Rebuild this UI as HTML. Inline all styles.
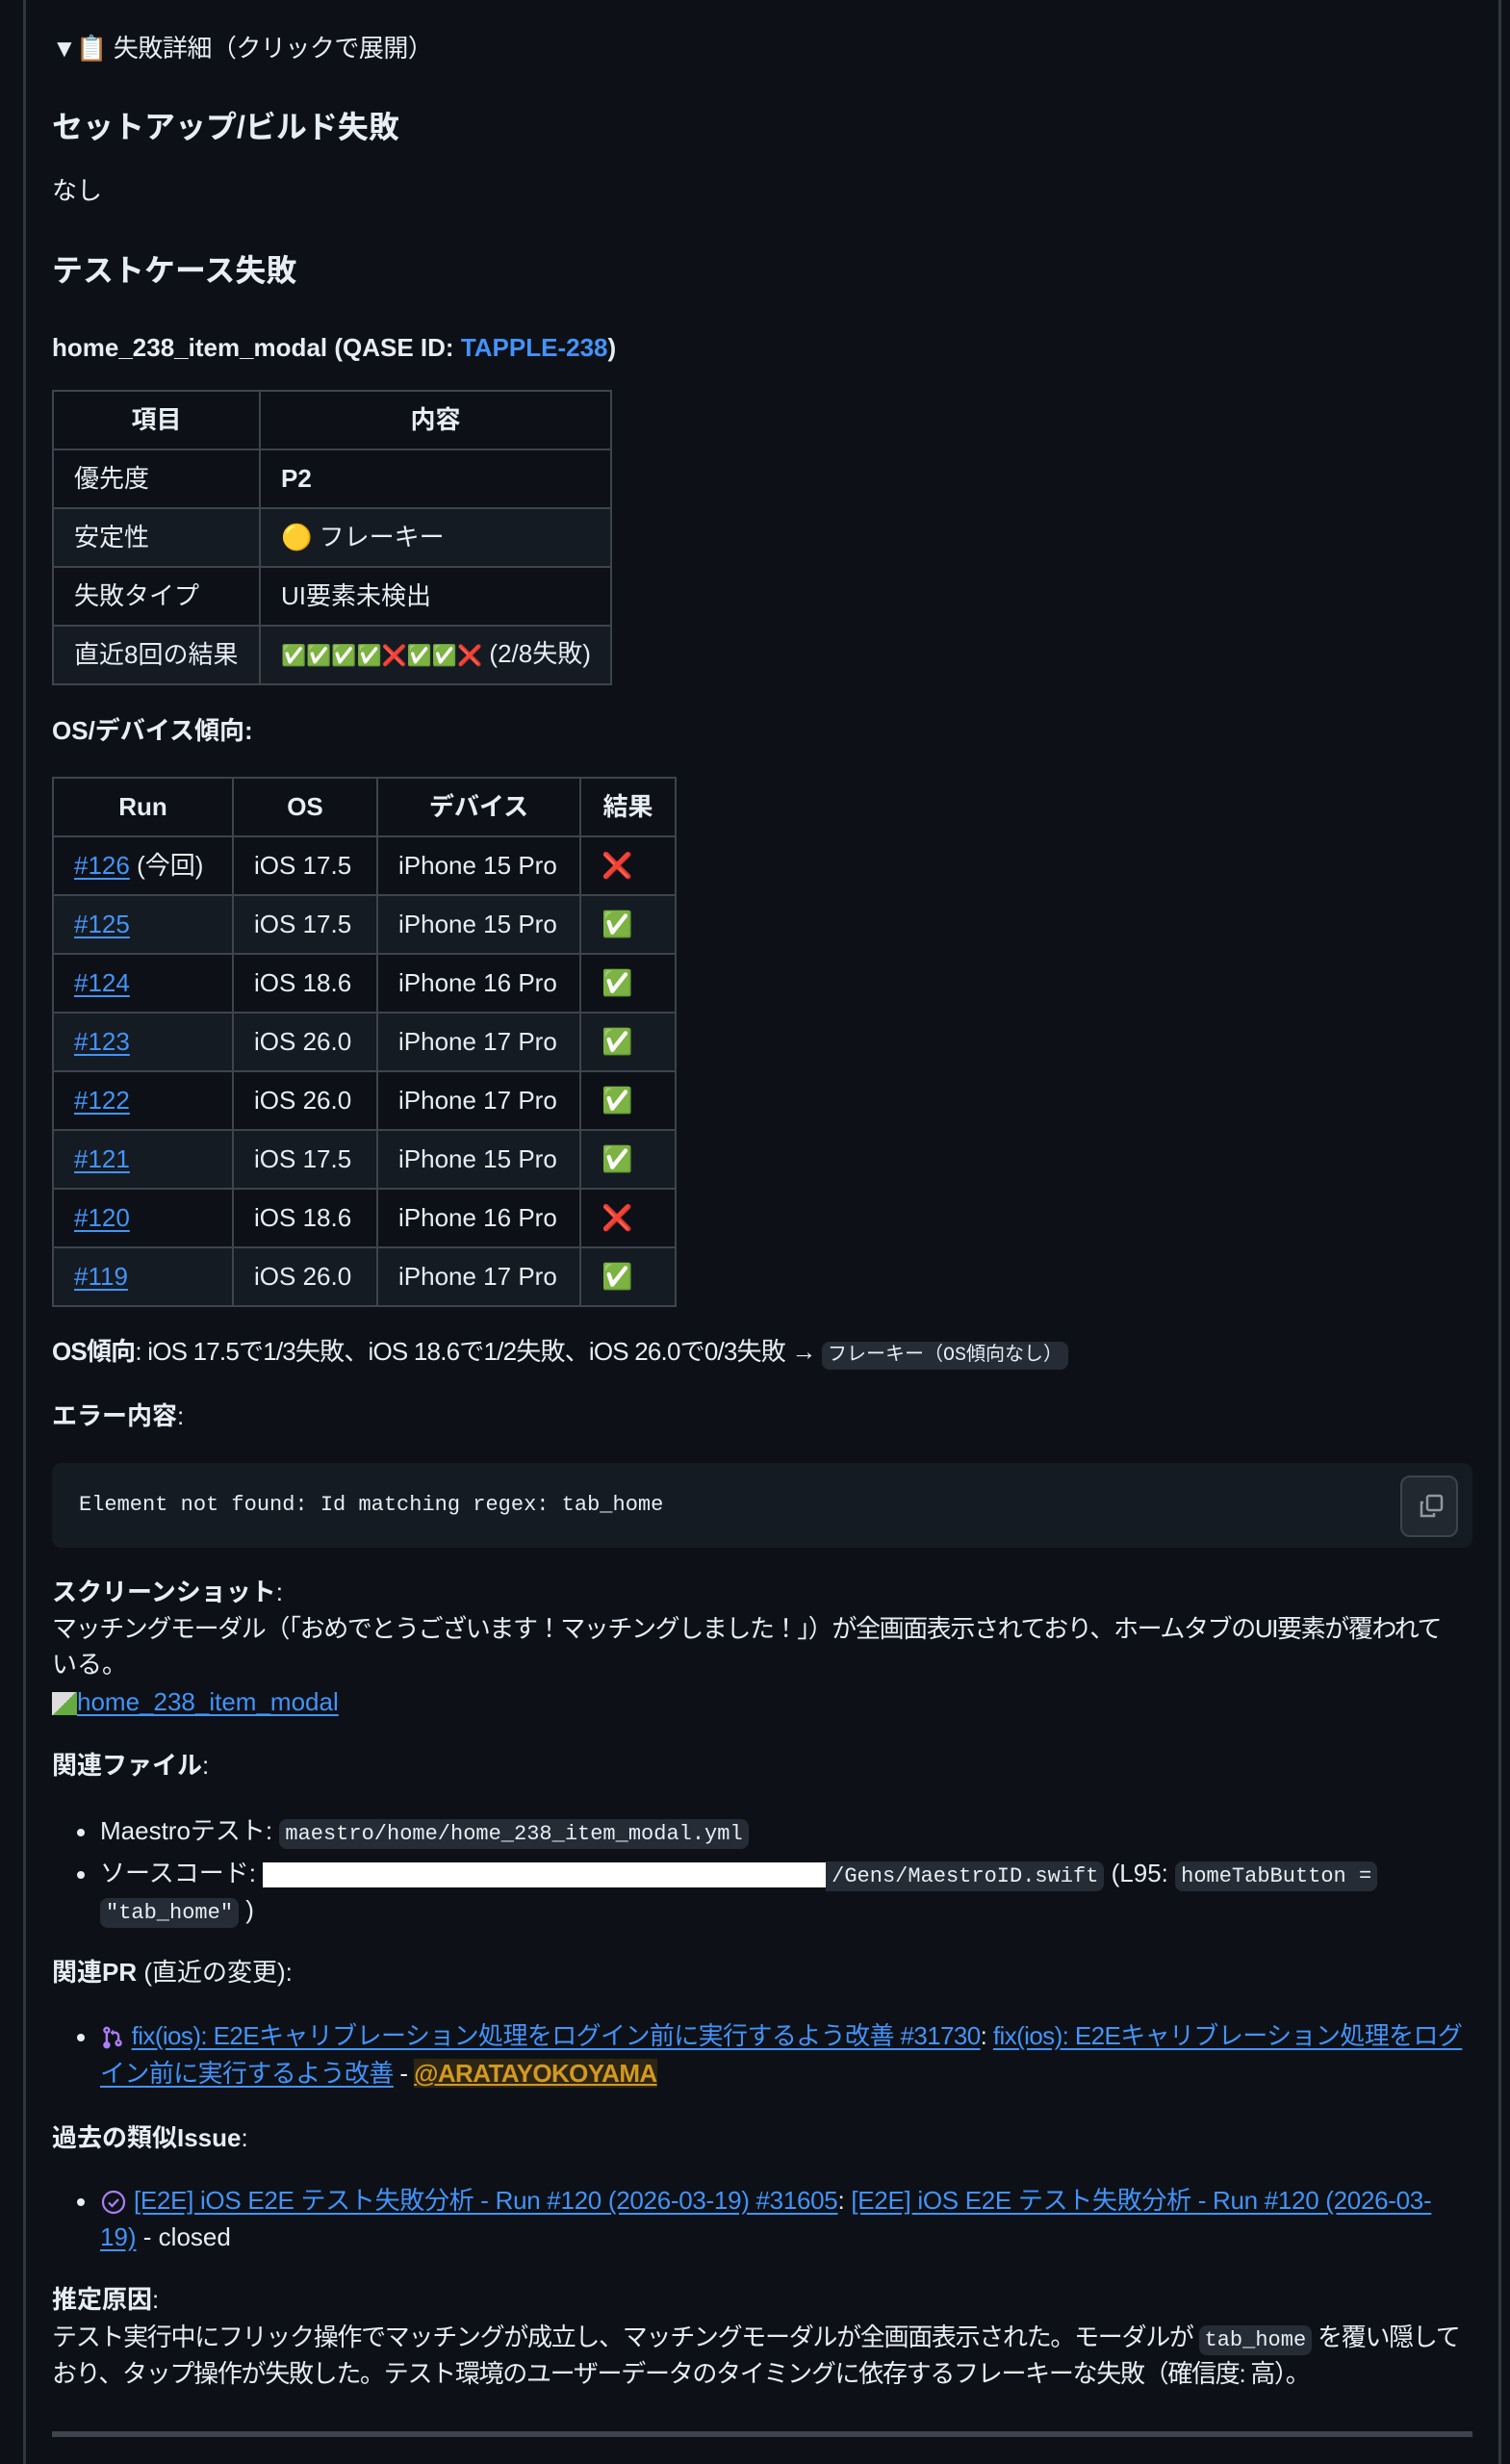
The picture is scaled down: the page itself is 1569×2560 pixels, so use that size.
<!DOCTYPE html>
<html><head><meta charset="utf-8"><style>
*{box-sizing:border-box;margin:0;padding:0}
html,body{width:1569px;height:2560px;background:#0d1117;overflow:hidden}
body{position:relative;font-family:"Liberation Sans","Noto Sans CJK JP",sans-serif;color:#e6edf3;font-size:26px;line-height:39px}
.bl{position:absolute;left:24px;top:0;width:3px;height:2560px;background:#30363d}
.br{position:absolute;left:1557px;top:0;width:3px;height:2560px;background:#30363d}
.a{position:absolute;left:54px;white-space:nowrap}
h3{font-size:32px;font-weight:bold;line-height:40px}
b{font-weight:bold}
a{color:#4493f8;text-decoration:underline;text-underline-offset:4px}
table{border-collapse:collapse;position:absolute;left:54px;table-layout:fixed}
td,th{border:2px solid #3d444d;height:61px;padding:0 21px;white-space:nowrap;overflow:hidden}
th{font-weight:bold;text-align:center}
tr.alt td{background:#151b23}
code{font-family:"Liberation Mono",monospace;font-size:22px;background:#262c36;border-radius:8px;padding:3px 6px;letter-spacing:0}
.pre{position:absolute;left:54px;top:1520px;width:1476px;height:88px;background:#151b23;border-radius:10px}
.pre span{position:absolute;left:28px;top:24px;font-family:"Liberation Mono",monospace;font-size:22px;line-height:40px}
.cp{position:absolute;left:1401px;top:13px;width:60px;height:64px;border:2px solid #3d444d;border-radius:10px;background:#212830}
.dot{display:inline-block;width:8px;height:8px;border-radius:50%;background:#e6edf3;margin-right:16px;vertical-align:middle}
.li{position:absolute;left:80px;white-space:nowrap}
.hr{position:absolute;left:54px;top:2526px;width:1476px;height:6px;background:#3d444d}
.em{font-size:21px;letter-spacing:0}
</style></head><body>
<div class="bl"></div><div class="br"></div>
<div class="a" style="top:31px;letter-spacing:-0.5px">▼📋 失敗詳細（クリックで展開）</div>
<h3 class="a" style="top:112px">セットアップ/ビルド失敗</h3>
<div class="a" style="top:179px">なし</div>
<h3 class="a" style="top:261px">テストケース失敗</h3>
<div class="a" style="top:342px"><b>home_238_item_modal (QASE ID: <a style="text-decoration:none">TAPPLE-238</a>)</b></div>
<table style="top:405px;width:580px">
<col style="width:215px"><col style="width:365px">
<tr><th>項目</th><th>内容</th></tr>
<tr><td>優先度</td><td><b>P2</b></td></tr>
<tr class="alt"><td>安定性</td><td>🟡 フレーキー</td></tr>
<tr><td>失敗タイプ</td><td>UI要素未検出</td></tr>
<tr class="alt"><td>直近8回の結果</td><td><span class="em">✅✅✅✅❌✅✅❌</span> (2/8失敗)</td></tr>
</table>
<div class="a" style="top:740px"><b>OS/デバイス傾向:</b></div>
<table style="top:807px;width:647px">
<col style="width:187px"><col style="width:150px"><col style="width:211px"><col style="width:99px">
<tr><th>Run</th><th>OS</th><th>デバイス</th><th>結果</th></tr>
<tr><td><a>#126</a> (今回)</td><td>iOS 17.5</td><td>iPhone 15 Pro</td><td>❌</td></tr>
<tr class="alt"><td><a>#125</a></td><td>iOS 17.5</td><td>iPhone 15 Pro</td><td>✅</td></tr>
<tr><td><a>#124</a></td><td>iOS 18.6</td><td>iPhone 16 Pro</td><td>✅</td></tr>
<tr class="alt"><td><a>#123</a></td><td>iOS 26.0</td><td>iPhone 17 Pro</td><td>✅</td></tr>
<tr><td><a>#122</a></td><td>iOS 26.0</td><td>iPhone 17 Pro</td><td>✅</td></tr>
<tr class="alt"><td><a>#121</a></td><td>iOS 17.5</td><td>iPhone 15 Pro</td><td>✅</td></tr>
<tr><td><a>#120</a></td><td>iOS 18.6</td><td>iPhone 16 Pro</td><td>❌</td></tr>
<tr class="alt"><td><a>#119</a></td><td>iOS 26.0</td><td>iPhone 17 Pro</td><td>✅</td></tr>
</table>
<div class="a" style="top:1385px;letter-spacing:-0.8px"><b>OS傾向</b>: iOS 17.5で1/3失敗、iOS 18.6で1/2失敗、iOS 26.0で0/3失敗 → <code style="font-size:20px">フレーキー（OS傾向なし）</code></div>
<div class="a" style="top:1452px"><b>エラー内容</b>:</div>
<div class="pre"><span>Element not found: Id matching regex: tab_home</span>
<div class="cp"><svg width="60" height="64" viewBox="0 0 60 64"><rect x="26" y="19" width="15" height="15" rx="2" fill="none" stroke="#9198a1" stroke-width="2.5"/><path d="M22 26h-2v14h13v-3" fill="none" stroke="#9198a1" stroke-width="2.5"/></svg></div></div>
<div class="a" style="top:1635px"><b>スクリーンショット</b>:</div>
<div class="a" style="top:1673px;letter-spacing:-1.4px">マッチングモーダル（「おめでとうございます！マッチングしました！」）が全画面表示されており、ホームタブのUI要素が覆われて</div>
<div class="a" style="top:1710px">いる。</div>
<div class="a" style="top:1749px"><span style="display:inline-block;width:26px;height:24px;vertical-align:middle;background:linear-gradient(135deg,#ddd 50%,#6a4 50%)"></span><a>home_238_item_modal</a></div>
<div class="a" style="top:1815px"><b>関連ファイル</b>:</div>
<div class="li" style="top:1883px"><span class="dot"></span>Maestroテスト: <code>maestro/home/home_238_item_modal.yml</code></div>
<div class="li" style="top:1927px"><span class="dot"></span>ソースコード: <span style="display:inline-block;width:585px;height:26px;background:#fff;vertical-align:middle"></span><code style="border-radius:0 8px 8px 0">/Gens/MaestroID.swift</code> (L95: <code>homeTabButton =</code></div>
<div class="a" style="top:1965px;left:104px"><code>"tab_home"</code> )</div>
<div class="a" style="top:2030px"><b>関連PR</b> (直近の変更):</div>
<div class="li" style="top:2096px;letter-spacing:-0.6px"><span class="dot"></span><svg width="26" height="28" viewBox="0 0 16 16" style="vertical-align:middle"><path fill="#ab7df8" d="M5 3.25a.75.75 0 1 1-1.5 0 .75.75 0 0 1 1.5 0zm0 2.12a2.25 2.25 0 1 0-1.5 0v5.26a2.25 2.25 0 1 0 1.5 0V5.37zM4.25 12a.75.75 0 1 0 0 1.5.75.75 0 0 0 0-1.5zm6.75-.75a.75.75 0 1 0 1.5 0 .75.75 0 0 0-1.5 0zm1.5-1.9a2.25 2.25 0 1 1-1.5 0V7A1.5 1.5 0 0 0 9.5 5.5h-1v1.19L6.5 4.75 8.5 2.8V4h1A3 3 0 0 1 12.5 7v2.35z"/></svg> <a>fix(ios): E2Eキャリブレーション処理をログイン前に実行するよう改善 #31730</a>: <a>fix(ios): E2Eキャリブレーション処理をログ</a></div>
<div class="a" style="top:2135px;left:104px;letter-spacing:-0.6px"><a>イン前に実行するよう改善</a> - <b style="color:#d29922;background:#2e2613;text-decoration:underline">@ARATAYOKOYAMA</b></div>
<div class="a" style="top:2202px"><b>過去の類似Issue</b>:</div>
<div class="li" style="top:2267px;letter-spacing:-0.3px"><span class="dot"></span><svg width="28" height="28" viewBox="0 0 28 28" style="vertical-align:middle"><circle cx="14" cy="14" r="11" fill="none" stroke="#ab7df8" stroke-width="2.2"/><path d="M9 14.5l3.5 3.5 6.5-7" fill="none" stroke="#ab7df8" stroke-width="2.2"/></svg> <a>[E2E] iOS E2E テスト失敗分析 - Run #120 (2026-03-19) #31605</a>: <a>[E2E] iOS E2E テスト失敗分析 - Run #120 (2026-03-</a></div>
<div class="a" style="top:2305px;left:104px"><a>19)</a> - closed</div>
<div class="a" style="top:2370px"><b>推定原因</b>:</div>
<div class="a" style="top:2409px;letter-spacing:-1.3px">テスト実行中にフリック操作でマッチングが成立し、マッチングモーダルが全画面表示された。モーダルが <code>tab_home</code> を覆い隠して</div>
<div class="a" style="top:2447px;letter-spacing:-1.3px">おり、タップ操作が失敗した。テスト環境のユーザーデータのタイミングに依存するフレーキーな失敗（確信度: 高）。</div>
<div class="hr"></div>
</body></html>
